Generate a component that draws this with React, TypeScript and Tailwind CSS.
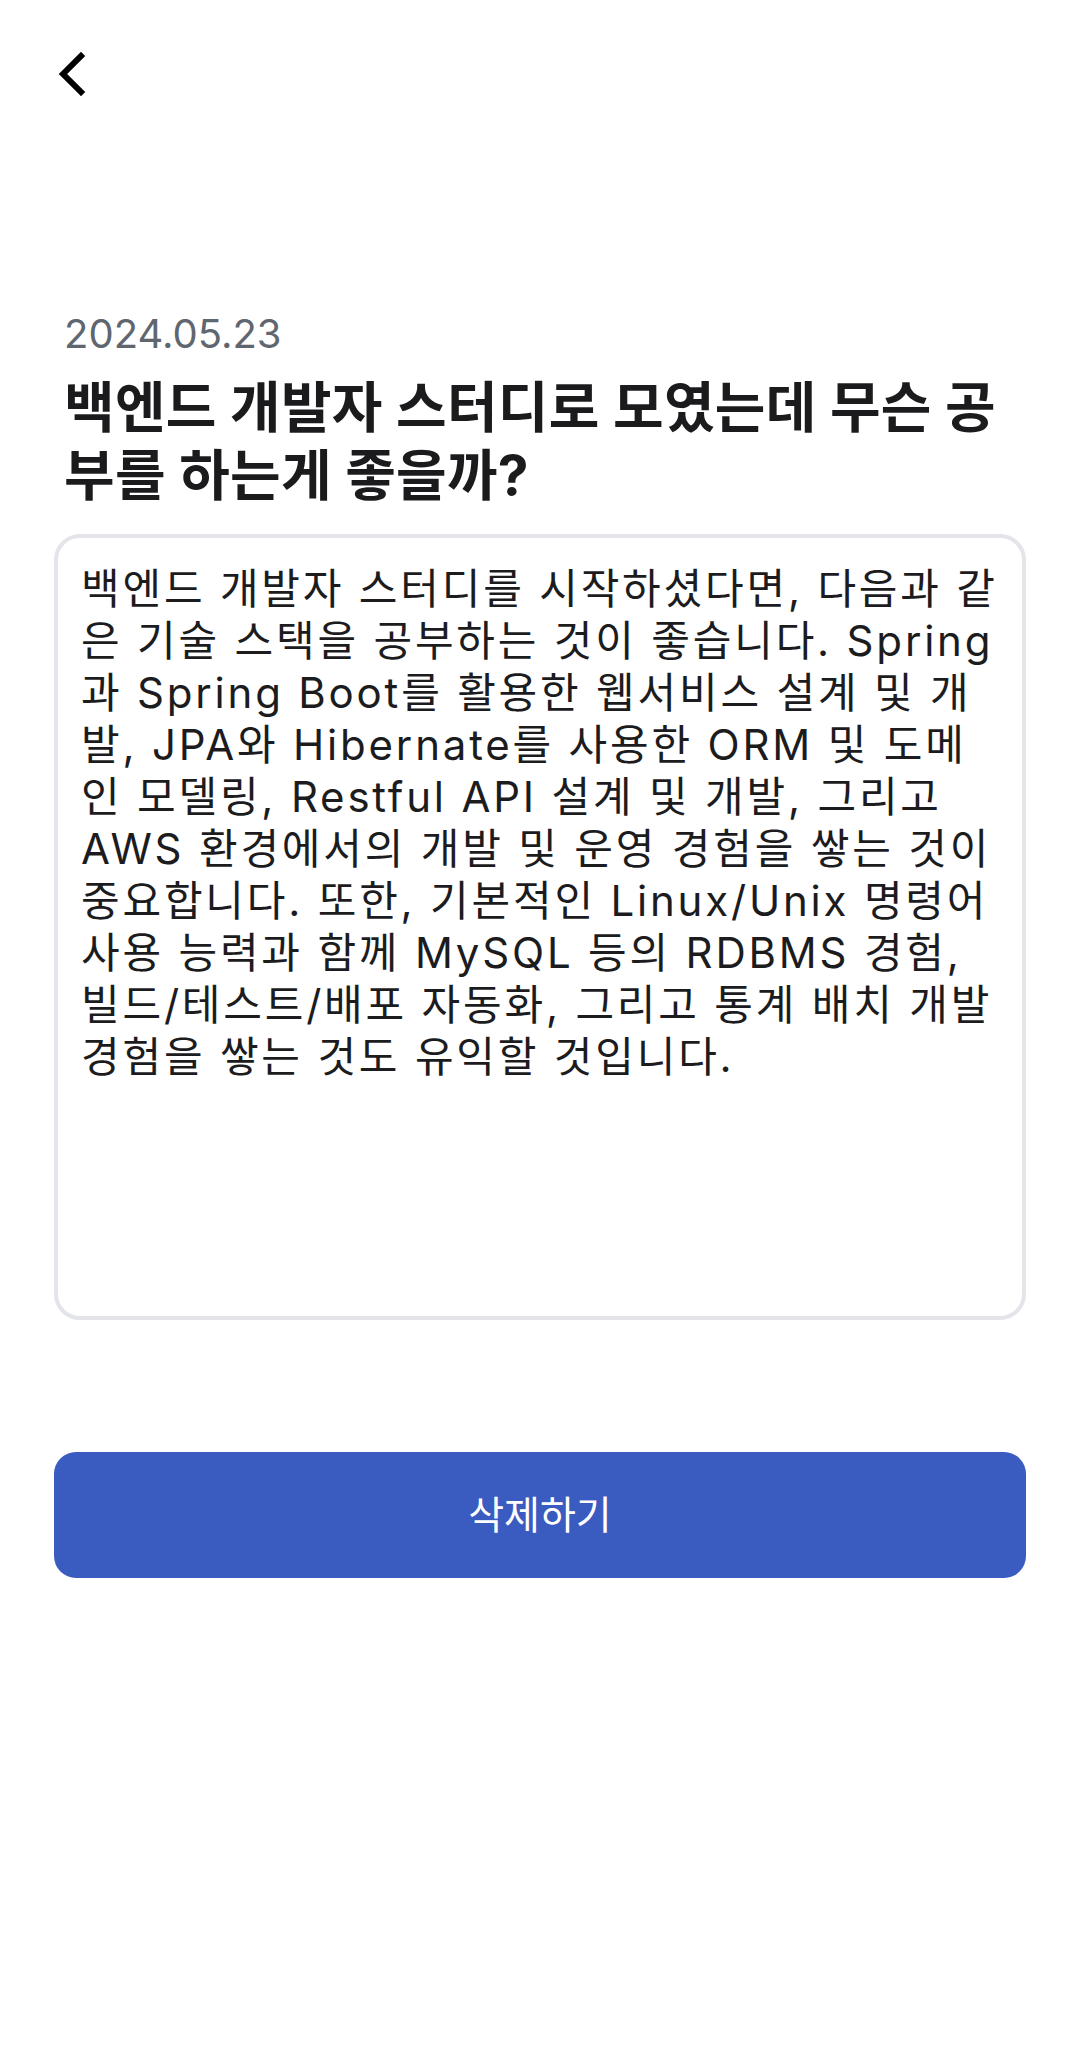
import { useState } from "react"

const bodyLines = [
  "백엔드 개발자 스터디를 시작하셨다면, 다음과 같",
  "은 기술 스택을 공부하는 것이 좋습니다. Spring",
  "과 Spring Boot를 활용한 웹서비스 설계 및 개",
  "발, JPA와 Hibernate를 사용한 ORM 및 도메",
  "인 모델링, Restful API 설계 및 개발, 그리고",
  "AWS 환경에서의 개발 및 운영 경험을 쌓는 것이",
  "중요합니다. 또한, 기본적인 Linux/Unix 명령어",
  "사용 능력과 함께 MySQL 등의 RDBMS 경험,",
  "빌드/테스트/배포 자동화, 그리고 통계 배치 개발",
  "경험을 쌓는 것도 유익할 것입니다.",
]

export default function App() {
  const [deleted, setDeleted] = useState(false)

  return (
    <div className="min-h-screen bg-white font-['Inter','Noto_Sans_CJK_KR',sans-serif]">
      {/* Header */}
      <header className="pl-[36px] pt-[38px]">
        <button type="button" aria-label="뒤로 가기" className="block text-black">
          <svg width="72" height="72" viewBox="0 0 24 24" fill="none" stroke="currentColor" strokeWidth="2" strokeLinecap="square" strokeLinejoin="miter">
            <path d="m15 18-6-6 6-6" />
          </svg>
        </button>
      </header>

      <main className="px-[54px]">
        <div className="px-[10px]">
          <p className="mt-[200px] text-[40px] leading-[48px] text-[#5f6670]">2024.05.23</p>
          <h1 className="mt-[15px] text-[55px] leading-[68px] font-bold tracking-[0.3px] text-[#1b1b1d]">
            백엔드 개발자 스터디로 모였는데 무슨 공부를 하는게 좋을까?
          </h1>
        </div>

        {/* Answer */}
        <div className="mt-[25px] h-[786px] rounded-[26px] border-[4px] border-[#e3e5ea] pl-[23px] pr-[10px] pt-[25px] text-[42px] leading-[52px] tracking-[2.8px] text-[#1c1c1e]">
          {bodyLines.map((line) => (
            <span key={line} className="block whitespace-nowrap">
              {line}
            </span>
          ))}
        </div>

        <button
          type="button"
          onClick={() => setDeleted(!deleted)}
          className="mt-[132px] flex h-[126px] w-full items-center justify-center rounded-[22px] bg-[#3a5bbf] text-[39px] text-white"
        >
          삭제하기
        </button>
      </main>
    </div>
  )
}
